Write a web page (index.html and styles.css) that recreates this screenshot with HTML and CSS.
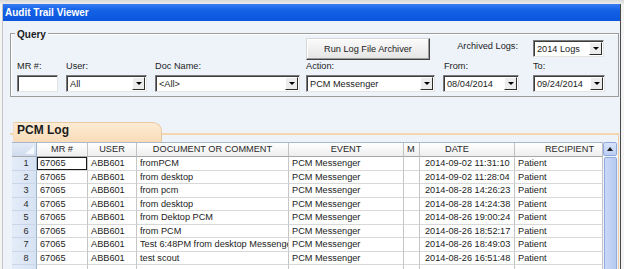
FILE: index.html
```html
<!DOCTYPE html>
<html lang="en">
<head>
  <meta charset="UTF-8" />
  <title>Audit Trail Viewer</title>
  <link rel="stylesheet" href="styles.css">
</head>
<body>
  <div class="backdrop"></div>

  <div class="window">
    <div class="titlebar">Audit Trail Viewer</div>

    <div class="client">
      <!-- Query group box -->
      <div class="group">
        <span class="group-title">Query</span>
        <div class="query-grid">
          <button class="btn archiver">Run Log File Archiver</button>
          <span class="archived-label">Archived Logs:</span>
          <div class="combo archived"><span>2014 Logs</span><i class="drop"></i></div>

          <span class="lbl">MR #:</span>
          <span class="lbl">User:</span>
          <span class="lbl">Doc Name:</span>
          <span class="lbl">Action:</span>
          <span class="lbl">From:</span>
          <span class="lbl">To:</span>

          <div class="textbox mr"></div>
          <div class="combo user"><span>All</span><i class="drop"></i></div>
          <div class="combo doc"><span>&lt;All&gt;</span><i class="drop"></i></div>
          <div class="combo action"><span>PCM Messenger</span><i class="drop"></i></div>
          <div class="combo from"><span>08/04/2014</span><i class="drop"></i></div>
          <div class="combo to"><span>09/24/2014</span><i class="drop"></i></div>
        </div>
      </div>

      <!-- Log tab -->
      <div class="tab">PCM Log</div>
      <div class="tab-page">
        <div class="grid">
          <div class="hd corner"><i class="corner-mark"></i></div>
          <div class="hd center">MR #</div>
          <div class="hd center">USER</div>
          <div class="hd center">DOCUMENT OR COMMENT</div>
          <div class="hd center">EVENT</div>
          <div class="hd">M</div>
          <div class="hd date-hd">DATE</div>
          <div class="hd right">RECIPIENT</div>

          <div class="rh">1</div><div class="cell focus">67065</div><div class="cell">ABB601</div><div class="cell">fromPCM</div><div class="cell">PCM Messenger</div><div class="cell"></div><div class="cell date">2014-09-02 11:31:10</div><div class="cell">Patient</div>
          <div class="rh">2</div><div class="cell">67065</div><div class="cell">ABB601</div><div class="cell">from desktop</div><div class="cell">PCM Messenger</div><div class="cell"></div><div class="cell date">2014-09-02 11:28:04</div><div class="cell">Patient</div>
          <div class="rh">3</div><div class="cell">67065</div><div class="cell">ABB601</div><div class="cell">from pcm</div><div class="cell">PCM Messenger</div><div class="cell"></div><div class="cell date">2014-08-28 14:26:23</div><div class="cell">Patient</div>
          <div class="rh">4</div><div class="cell">67065</div><div class="cell">ABB601</div><div class="cell">from desktop</div><div class="cell">PCM Messenger</div><div class="cell"></div><div class="cell date">2014-08-28 14:24:38</div><div class="cell">Patient</div>
          <div class="rh">5</div><div class="cell">67065</div><div class="cell">ABB601</div><div class="cell">from Dektop PCM</div><div class="cell">PCM Messenger</div><div class="cell"></div><div class="cell date">2014-08-26 19:00:24</div><div class="cell">Patient</div>
          <div class="rh">6</div><div class="cell">67065</div><div class="cell">ABB601</div><div class="cell">from PCM</div><div class="cell">PCM Messenger</div><div class="cell"></div><div class="cell date">2014-08-26 18:52:17</div><div class="cell">Patient</div>
          <div class="rh">7</div><div class="cell">67065</div><div class="cell">ABB601</div><div class="cell">Test 6:48PM from desktop Messenger</div><div class="cell">PCM Messenger</div><div class="cell"></div><div class="cell date">2014-08-26 18:49:03</div><div class="cell">Patient</div>
          <div class="rh">8</div><div class="cell">67065</div><div class="cell">ABB601</div><div class="cell">test scout</div><div class="cell">PCM Messenger</div><div class="cell"></div><div class="cell date">2014-08-26 16:51:48</div><div class="cell">Patient</div>
          <div class="rh"></div><div class="cell"></div><div class="cell"></div><div class="cell"></div><div class="cell"></div><div class="cell"></div><div class="cell"></div><div class="cell"></div>
        </div>

        <div class="vscroll">
          <div class="scroll-up"></div>
          <div class="scroll-thumb"></div>
        </div>
      </div>
    </div>
  </div>
</body>
</html>
```

FILE: styles.css
```css
body {
  margin: 0;
  height: 269px;
  overflow: hidden;
  background: #f4f4f4;
  font-family: 'Liberation Sans', Arial, sans-serif;
  font-size: 9.2px;
  color: #1c1c1c;
}

/* strip of the window behind */
.backdrop {
  height: 4px;
  background: linear-gradient(#d8d8d8, #ececec);
}

.window {
  margin-left: 2px;
  width: 619px;
  border-left: 1px solid #c4c4c4;
  border-right: 1px solid #4a4a4a;
  box-sizing: border-box;
  background: #eef3fa;
  height: 265px;
}

.titlebar {
  height: 17px;
  line-height: 17px;
  padding-left: 2px;
  background: linear-gradient(#3a7cf4 0%, #1462e6 35%, #0b56dc 100%);
  color: #fff;
  font-size: 10px;
  font-weight: bold;
}

.client {
  padding: 12px 1px 0 7px;
}

/* group box */
.group {
  position: relative;
  border: 1px solid #9c9c9c;
  box-shadow: inset 1px 1px 0 #fff;
  padding: 4px 0 4px 6px;
}

.group-title {
  position: absolute;
  top: -5px;
  left: 4px;
  padding: 0 2px;
  line-height: 12px;
  font-size: 10px;
  font-weight: bold;
  background: #eef3fa;
}

.query-grid {
  display: grid;
  grid-template-columns: 49px 89px 151px 138px 89px 1fr;
  grid-template-rows: 22px 15px 17px;
}

.btn {
  font: inherit;
  color: inherit;
  padding: 0;
  background: linear-gradient(#fbfbfb, #e4e4e4);
  border: 1px solid;
  border-color: #d6d6d6 #3e3e3e #3e3e3e #d6d6d6;
  box-shadow: inset -1px -1px 0 #9a9a9a, inset 1px 1px 0 #fff;
}

.archiver {
  grid-column: 4;
  grid-row: 1;
  width: 124px;
}

.archived-label {
  grid-column: 5;
  grid-row: 1;
  justify-self: end;
  margin: 3px 15px 0 0;
  line-height: 11px;
}

.archived {
  grid-column: 6;
  grid-row: 1;
  width: 71px;
  margin-top: 2px;
}

.lbl {
  grid-row: 2;
  line-height: 11px;
  padding-top: 1px;
}

.textbox,
.combo {
  grid-row: 3;
  height: 17px;
  box-sizing: border-box;
  background: #fff;
  border: 1px solid;
  border-color: #7a7a7a #e4e4e4 #e4e4e4 #7a7a7a;
  box-shadow: inset 1px 1px 0 #3c3c3c;
}

.combo {
  display: flex;
}

.combo span {
  flex: 1;
  padding: 1px 0 0 3px;
  line-height: 14px;
  white-space: nowrap;
  overflow: hidden;
}

.archived {
  grid-row: 1;
}

.drop {
  width: 13px;
  margin: 1px 1px 1px 0;
  box-sizing: border-box;
  background: #ececec;
  border: 1px solid;
  border-color: #fff #2c2c2c #2c2c2c #fff;
  display: flex;
  align-items: center;
  justify-content: center;
}

.drop::after {
  content: "";
  border-left: 3px solid transparent;
  border-right: 3px solid transparent;
  border-top: 3px solid #000;
}

.mr { width: 41px; }
.user { width: 81px; }
.doc { width: 145px; }
.action { width: 129px; }
.from { width: 76px; margin-left: -1px; }
.to { width: 72px; }

/* tab + grid */
.tab {
  position: relative;
  z-index: 2;
  margin: 25px 0 -9px 3px;
  width: 149px;
  height: 20px;
  box-sizing: border-box;
  padding: 1px 0 0 3px;
  line-height: 13px;
  font-size: 12px;
  font-weight: bold;
  background: linear-gradient(#fdebd4, #f9dcb8);
  border: 1px solid #e9c9a2;
  border-left-color: #f3dcc0;
  border-bottom: none;
  border-radius: 0 9px 0 0;
}

.tab-page {
  display: flex;
  border-top: 2px solid #f6d6ae;
  border-right: 1px solid #f1cfa6;
  padding: 8px 0 0 2px;
}

.grid {
  display: grid;
  grid-template-columns: 25px 51px 49px 152px 115px 16px 95px 88px;
  grid-template-rows: 14px;
  grid-auto-rows: 13.5px;
  background: #fff;
  border-top: 1px solid #a8b8cc;
  margin-top: -1px;
}

.hd {
  box-sizing: border-box;
  line-height: 13px;
  padding: 0 3px;
  background: linear-gradient(#ffffff, #eeeeee);
  border-right: 1px solid #c2c2c2;
  border-bottom: 1px solid #a9a9a9;
  color: #2a2a2a;
  white-space: nowrap;
}

.center { text-align: center; }
.right { text-align: right; padding-right: 8px; }
.date-hd { padding-left: 25px; }

.corner {
  background: linear-gradient(#e3ebf7, #cfdcef);
  border-right-color: #9fb3cf;
  display: flex;
  justify-content: flex-end;
  align-items: flex-end;
  padding: 0 2px 2px 0;
}

.corner-mark {
  width: 0;
  height: 0;
  border-left: 9px solid transparent;
  border-bottom: 8px solid #f5f8fd;
}

.rh {
  box-sizing: border-box;
  line-height: 13px;
  padding-left: 4px;
  text-align: center;
  background: linear-gradient(90deg, #e4ecf8, #d6e2f3);
  border-right: 1px solid #9fb3cf;
  border-bottom: 1px solid #c9d6ea;
  color: #2a2a2a;
}

.cell {
  box-sizing: border-box;
  line-height: 12.5px;
  padding: 0 2px 0 3px;
  border-right: 1px solid #c6c6c6;
  border-bottom: 1px solid #d8d8d8;
  white-space: nowrap;
  overflow: hidden;
}

.cell.date { padding-left: 5px; }

.focus {
  box-shadow: inset 0 0 0 1px #1a1a1a;
}

.vscroll {
  width: 14px;
  display: flex;
  flex-direction: column;
  background: #eef3fc;
  margin-top: -1px;
}

.scroll-up {
  height: 14px;
  box-sizing: border-box;
  background: linear-gradient(#d8e4fa, #b9cdf4);
  border: 1px solid #8fa9dc;
  border-radius: 2px;
  display: flex;
  align-items: center;
  justify-content: center;
}

.scroll-up::after {
  content: "";
  border-left: 3px solid transparent;
  border-right: 3px solid transparent;
  border-bottom: 4px solid #1a1a1a;
}

.scroll-thumb {
  flex: 1;
  margin: 1px 0 0 1px;
  background: linear-gradient(90deg, #c9d8f6, #b6cbf2);
  border: 1px solid #93abdc;
  border-radius: 2px;
}
```
